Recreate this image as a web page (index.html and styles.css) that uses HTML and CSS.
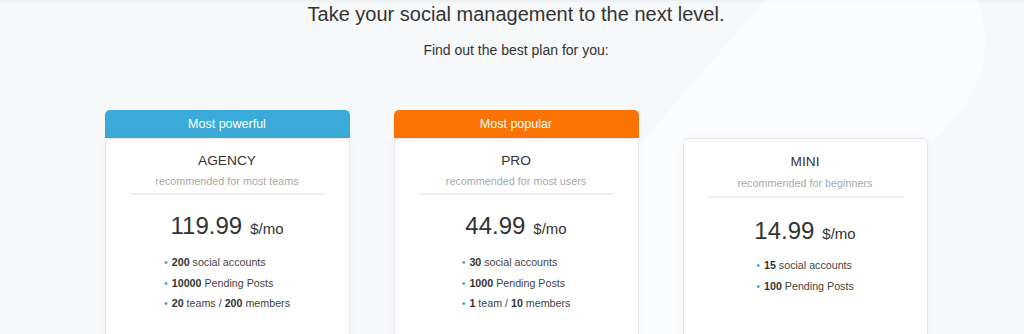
FILE: index.html
```html
<!DOCTYPE html>
<html lang="en">
<head>
<meta charset="utf-8">
<title>Pricing</title>
<link rel="stylesheet" href="styles.css">
</head>
<body>
<div class="page">
  <div class="blob"></div>
  <main class="main">
    <h1 class="title">Take your social management to the next level.</h1>
    <p class="subtitle">Find out the best plan for you:</p>
    <div class="plans">
      <div class="plan">
        <div class="ribbon ribbon-blue">Most powerful</div>
        <div class="card">
          <div class="name">AGENCY</div>
          <div class="rec">recommended for most teams</div>
          <div class="divider"></div>
          <div class="price"><span class="amount">119.99</span><span class="unit">$/mo</span></div>
          <ul class="features">
            <li><b>200</b> social accounts</li>
            <li><b>10000</b> Pending Posts</li>
            <li><b>20</b> teams / <b>200</b> members</li>
          </ul>
        </div>
      </div>
      <div class="plan">
        <div class="ribbon ribbon-orange">Most popular</div>
        <div class="card">
          <div class="name">PRO</div>
          <div class="rec">recommended for most users</div>
          <div class="divider"></div>
          <div class="price"><span class="amount">44.99</span><span class="unit">$/mo</span></div>
          <ul class="features">
            <li><b>30</b> social accounts</li>
            <li><b>1000</b> Pending Posts</li>
            <li><b>1</b> team / <b>10</b> members</li>
          </ul>
        </div>
      </div>
      <div class="plan plan-plain">
        <div class="card">
          <div class="name">MINI</div>
          <div class="rec">recommended for beginners</div>
          <div class="divider"></div>
          <div class="price"><span class="amount">14.99</span><span class="unit">$/mo</span></div>
          <ul class="features">
            <li><b>15</b> social accounts</li>
            <li><b>100</b> Pending Posts</li>
          </ul>
        </div>
      </div>
    </div>
  </main>
</div>
</body>
</html>
```
FILE: styles.css
```css
html, body {
  margin: 0;
  padding: 0;
}
body {
  background: linear-gradient(#eceef1 0, #f7f8fa 4px) #f7f8fa;
  font-family: "Liberation Sans", Arial, sans-serif;
  color: #333;
}
.page {
  position: relative;
  overflow: hidden;
  height: 334px;
}
.blob {
  position: absolute;
  left: 575px;
  top: -140px;
  width: 220px;
  height: 800px;
  border-radius: 110px;
  background: rgba(255, 255, 255, 0.55);
  transform: rotate(41deg);
}
.main {
  position: relative;
  padding: 2px 0 0 8px;
  text-align: center;
}
.title {
  margin: 0;
  font-size: 20px;
  line-height: 24px;
  font-weight: normal;
  color: #333;
}
.subtitle {
  margin: 15px 0 0;
  font-size: 14px;
  line-height: 18px;
  color: #333;
}
.plans {
  display: flex;
  justify-content: center;
  align-items: flex-start;
  gap: 44px;
  margin-top: 51px;
}
.plan {
  width: 245px;
}
.plan-plain {
  margin-top: 28px;
}
.ribbon {
  height: 28px;
  line-height: 29px;
  border-radius: 5px 5px 0 0;
  color: #fff;
  font-size: 12.5px;
}
.ribbon-blue {
  background: #3aabd8;
}
.ribbon-orange {
  background: #fb7304;
}
.card {
  background: #fff;
  border: 1px solid #e6e8eb;
  border-radius: 5px 5px 0 0;
  box-shadow: 0 0 8px rgba(0, 0, 0, 0.04);
  height: 260px;
  padding-top: 13px;
  box-sizing: border-box;
}
.plan-plain .card {
  padding-top: 14px;
}
.name {
  font-size: 13.7px;
  line-height: 18px;
  color: #333;
}
.rec {
  margin-top: 4px;
  font-size: 10.8px;
  line-height: 14px;
  color: #a9a9a9;
}
.plan-plain .rec {
  margin-top: 5px;
}
.divider {
  margin: 5px 24px 0;
  height: 2px;
  background: #eeeeee;
}
.plan-plain .divider {
  margin-top: 6px;
}
.price {
  margin-top: 16px;
  line-height: 30px;
  color: #333;
}
.plan-plain .price {
  margin-top: 18px;
}
.amount {
  font-size: 24px;
}
.unit {
  font-size: 15px;
  margin-left: 8px;
}
.features {
  display: inline-block;
  list-style: none;
  margin: 8px 0 0;
  padding: 0;
  text-align: left;
  font-size: 10.7px;
  line-height: 20.5px;
  color: #444;
}
.plan-plain .features {
  margin-top: 6px;
}
.features li::before {
  content: "\2022";
  color: #3aabd8;
  margin-right: 4px;
}
.features b {
  color: #333;
}
```
